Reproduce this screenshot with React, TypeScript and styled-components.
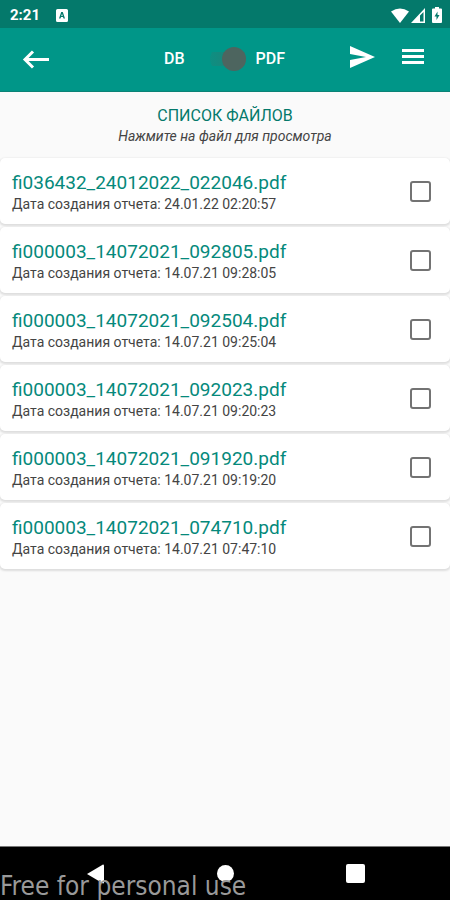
import React from "react";
import styled, { createGlobalStyle } from "styled-components";

const GlobalStyle = createGlobalStyle`
  *, *::before, *::after { box-sizing: border-box; }
  body { margin: 0; font-family: Roboto, "Noto Sans", sans-serif; background: #fafafa; }
  button { border: 0; padding: 0; background: none; color: inherit; font: inherit; cursor: pointer; }
  svg { display: block; fill: currentColor; }
`;

const Screen = styled.div`
  min-height: 100vh;
  display: flex;
  flex-direction: column;
  background: #fafafa;
`;

const StatusBar = styled.div`
  height: 28px;
  padding: 2px 6px 0 10px;
  display: flex;
  align-items: center;
  background: #04796b;
  color: #fff;
`;

const Clock = styled.time`
  font-size: 15px;
  font-weight: 700;
  line-height: 20px;
`;

const NoticeIcon = styled.svg`
  margin-left: 16px;
`;

const StatusIcons = styled.div`
  margin-left: auto;
  display: flex;
  align-items: center;
  gap: 2px;
`;

const Toolbar = styled.header`
  height: 64px;
  padding: 0 23px 2px 22px;
  display: grid;
  grid-template-columns: 1fr auto 1fr;
  align-items: center;
  background: #009688;
  border-bottom: 1px solid #0b8276;
  color: #fff;
`;

const IconButton = styled.button`
  display: flex;
  align-items: center;
  justify-content: center;
  width: 28px;
  height: 28px;
`;

const Actions = styled.div`
  padding-bottom: 4px;
  display: flex;
  justify-content: flex-end;
  gap: 23px;
`;

const ModeSwitch = styled.label`
  display: flex;
  align-items: center;
  font-size: 16px;
  font-weight: 500;
  line-height: 20px;
`;

const SwitchInput = styled.input`
  appearance: none;
  width: 36px;
  height: 24px;
  margin: 0 10px 0 25px;
  display: flex;
  align-items: center;
  justify-content: flex-start;
  border-radius: 12px;
  background: linear-gradient(to right, #0d8f82, #2a7c72) center / 36px 14px no-repeat;
  &::before {
    content: "";
    width: 24px;
    height: 24px;
    border-radius: 50%;
    background: #4d655f;
  }
  &:checked { justify-content: flex-end; }
`;

const Heading = styled.div`
  padding: 14px 12px 12px;
  text-align: center;
`;

const Title = styled.h1`
  margin: 0;
  font-size: 16px;
  font-weight: 400;
  line-height: 20px;
  color: #04796b;
`;

const Hint = styled.p`
  margin: 0;
  font-size: 14px;
  font-style: italic;
  line-height: 20px;
  color: #444;
`;

const FileList = styled.ul`
  margin: 0;
  padding: 0;
  list-style: none;
  display: flex;
  flex-direction: column;
  gap: 3px;
`;

const FileCard = styled.li`
  min-height: 66px;
  padding: 0 19px 0 12px;
  display: flex;
  align-items: center;
  justify-content: space-between;
  border-radius: 5px;
  background: #fff;
  box-shadow: 0 1px 2px 1px #dedede;
`;

const FileInfo = styled.div`
  padding-top: 2px;
`;

const FileName = styled.a`
  display: block;
  font-size: 19px;
  line-height: 24px;
  color: #05897b;
  text-decoration: none;
`;

const FileDate = styled.p`
  margin: 0;
  font-size: 14px;
  line-height: 18px;
  color: #444;
`;

const Check = styled.input`
  appearance: none;
  flex: none;
  width: 21px;
  height: 21px;
  margin: 0;
  border: 2px solid #737373;
  border-radius: 3px;
  background: #fff;
  &:checked { background: #009688; border-color: #009688; }
`;

const NavBar = styled.nav`
  position: relative;
  height: 54px;
  margin-top: auto;
  padding: 0 30px;
  display: grid;
  grid-template-columns: repeat(3, 1fr);
  justify-items: center;
  align-items: center;
  background: #000;
  border-top: 1px solid #777;
  color: #fff;
`;

const Watermark = styled.span`
  position: absolute;
  left: 0;
  bottom: 0;
  font-family: "DejaVu Sans Condensed", "DejaVu Sans", sans-serif;
  font-size: 26px;
  line-height: 28px;
  white-space: nowrap;
  color: #999;
  pointer-events: none;
`;

const files = [
  { name: "fi036432_24012022_022046.pdf", date: "24.01.22 02:20:57" },
  { name: "fi000003_14072021_092805.pdf", date: "14.07.21 09:28:05" },
  { name: "fi000003_14072021_092504.pdf", date: "14.07.21 09:25:04" },
  { name: "fi000003_14072021_092023.pdf", date: "14.07.21 09:20:23" },
  { name: "fi000003_14072021_091920.pdf", date: "14.07.21 09:19:20" },
  { name: "fi000003_14072021_074710.pdf", date: "14.07.21 07:47:10" },
];

export default function App() {
  return (
    <>
      <GlobalStyle />
      <Screen>
        <StatusBar>
          <Clock>2:21</Clock>
          <NoticeIcon width="12" height="13" viewBox="0 0 12 13" aria-hidden="true">
            <path fillRule="evenodd" d="M1.5 0h9A1.5 1.5 0 0 1 12 1.500v10a1.500 1.500 0 0 1-1.500 1.500h-9A1.500 1.500 0 0 1 0 11.500v-10A1.500 1.500 0 0 1 1.500 0zM5.200 3 3 9.500h1.500L5 8h2l.5 1.500H9L6.800 3zM6 4.800 6.700 7H5.300z" />
          </NoticeIcon>
          <StatusIcons>
            <svg width="18" height="15" viewBox="0 0 18 15" aria-hidden="true">
              <path d="M0 3.500Q9-2.500 18 3.500L9 15z" />
            </svg>
            <svg width="15" height="15" viewBox="0 0 15 15" aria-hidden="true">
              <path fillRule="evenodd" d="M14 0v15H0zM12.500 4v9.500H9V7.500z" />
            </svg>
            <svg width="16" height="16" viewBox="-2 0 16 16" aria-hidden="true">
              <path fillRule="evenodd" d="M5 0h4v1.500h2q1 0 1 1V15q0 1-1 1H3q-1 0-1-1V2.500q0-1 1-1h2zM7.500 4.500 4.500 9.500h2V13l3-5h-2z" />
            </svg>
          </StatusIcons>
        </StatusBar>
        <Toolbar>
          <IconButton aria-label="Назад">
            <svg width="28" height="20" viewBox="0 0 28 20" aria-hidden="true">
              <path d="M11 2.500 3 10.500 11 18.500M3 10.500H27" fill="none" stroke="currentColor" strokeWidth="3" />
            </svg>
          </IconButton>
          <ModeSwitch>
            <span>DB</span>
            <SwitchInput type="checkbox" role="switch" defaultChecked />
            <span>PDF</span>
          </ModeSwitch>
          <Actions>
            <IconButton aria-label="Отправить">
              <svg width="26" height="22" viewBox="0 0 26 22" aria-hidden="true">
                <path d="M1 0 26 11 1 22V14l16-3L1 8z" />
              </svg>
            </IconButton>
            <IconButton aria-label="Меню">
              <svg width="22" height="15" viewBox="0 0 22 15" aria-hidden="true">
                <path d="M0 0h22v3H0zM0 6h22v3H0zM0 12h22v3H0z" />
              </svg>
            </IconButton>
          </Actions>
        </Toolbar>
        <main>
          <Heading>
            <Title>СПИСОК ФАЙЛОВ</Title>
            <Hint>Нажмите на файл для просмотра</Hint>
          </Heading>
          <FileList>
            {files.map((file) => (
              <FileCard key={file.name}>
                <FileInfo>
                  <FileName href={`#${file.name}`}>{file.name}</FileName>
                  <FileDate>Дата создания отчета: {file.date}</FileDate>
                </FileInfo>
                <Check type="checkbox" aria-label={file.name} />
              </FileCard>
            ))}
          </FileList>
        </main>
        <NavBar>
          <IconButton aria-label="Назад">
            <svg width="17" height="20" viewBox="0 0 17 20" aria-hidden="true">
              <path d="M16 0.500q1 0 1 1v17q0 1-1 1L0 10z" />
            </svg>
          </IconButton>
          <IconButton aria-label="Домой">
            <svg width="17" height="17" viewBox="0 0 17 17" aria-hidden="true">
              <circle cx="8.500" cy="8.500" r="8.500" />
            </svg>
          </IconButton>
          <IconButton aria-label="Недавние">
            <svg width="19" height="19" viewBox="0 0 19 19" aria-hidden="true">
              <rect width="19" height="19" rx="2" />
            </svg>
          </IconButton>
          <Watermark>Free for personal use</Watermark>
        </NavBar>
      </Screen>
    </>
  );
}
